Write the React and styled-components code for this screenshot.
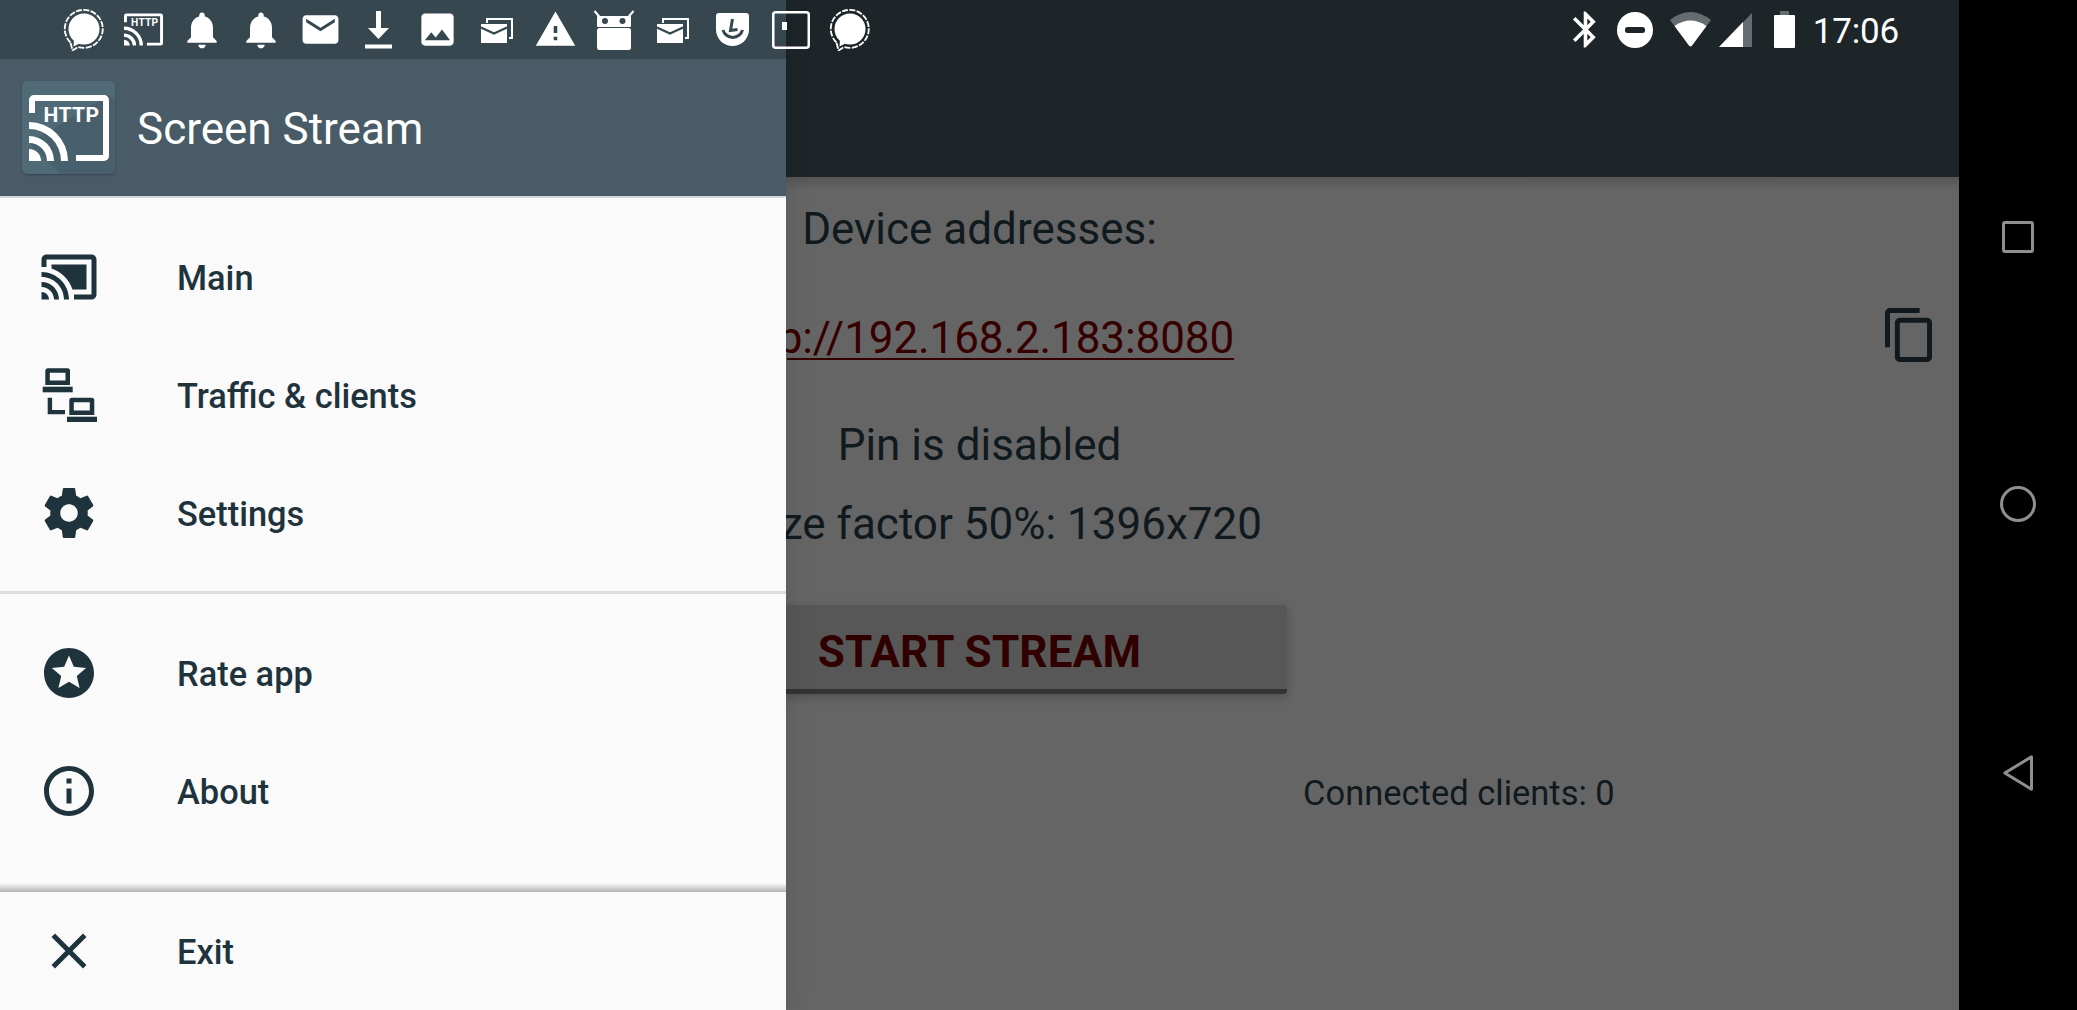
import React from 'react';
import styled, { createGlobalStyle } from 'styled-components';

const Global = createGlobalStyle`
  html, body { margin: 0; padding: 0; background: #000; overflow: hidden; }
  * { box-sizing: border-box; }
`;

const Screen = styled.div`
  width: 2077px; height: 1010px; display: flex; overflow: hidden; background: #000;
  font-family: Roboto, "Liberation Sans", sans-serif;
`;
const Phone = styled.div`
  position: relative; width: 1959px; height: 100%; display: flex; flex-direction: column; background: #656565;
`;
const AppBar = styled.header`
  height: 177px; flex: none; background: #1d2529;
`;
const StatusBar = styled.div`
  position: relative; z-index: 2; height: 59px; display: flex; align-items: center; justify-content: space-between;
  padding: 0 60px 0 55px; color: #fff;
`;
const NotifIcons = styled.div`display: flex; align-items: center;`;
const Slot = styled.span`
  width: 58.9px; height: 59px; display: flex; align-items: center; justify-content: center; flex: none;
  padding-top: ${p => p.$dy || 0}px;
`;
const SysIcons = styled.div`display: flex; align-items: center;`;
const SysSlot = styled.span`
  display: flex; margin-right: ${p => p.$mr}px; padding-top: ${p => p.$dy || 0}px;
`;
const Clock = styled.span`
  font-size: 35px; line-height: 40px; letter-spacing: -0.2px; color: #fff; margin-top: 4px;
`;
const Svg = styled.svg`display: block; fill: currentColor; flex: none;`;

const Content = styled.main`
  flex: 1; min-height: 0; display: flex; flex-direction: column; align-items: center; padding-top: 27px;
  background: linear-gradient(#565656, #656565 14px);
  color: #10191e;
`;
const Line = styled.div`
  font-size: 44px; line-height: 50px; height: 50px; white-space: nowrap; flex: none;
  margin-top: ${p => p.$mt || 0}px;
`;
const LinkRow = styled.div`
  width: 100%; height: 55px; margin-top: 54px; flex: none;
  display: grid; grid-template-columns: 1fr auto 1fr; padding-right: 27px; padding-left: 27px;
`;
const Address = styled.a`
  grid-column: 2; align-self: end; font-size: 44px; line-height: 50px; color: #360000; text-decoration: underline;
  text-decoration-thickness: 2px; text-underline-offset: 5px; white-space: nowrap; letter-spacing: -0.1px;
`;
const CopyBtn = styled.span`
  grid-column: 3; justify-self: end; color: #10191e;
`;
const StartButton = styled.button`
  width: 615px; height: 89px; margin-top: 56px; flex: none; border: 0; border-bottom: 5px solid #333;
  border-radius: 4px; background: #575757; color: #300000; font: 700 44px Roboto, sans-serif; letter-spacing: 0.2px;
  box-shadow: 0 3px 8px rgba(0,0,0,.22); padding: 9px 0 0;
`;
const Clients = styled.div`
  flex: none; margin-top: 74px; align-self: stretch; padding-left: 1303px; font-size: 34.5px; line-height: 50px; white-space: nowrap;
`;

const Drawer = styled.aside`
  position: absolute; left: 0; top: 0; bottom: 0; width: 786px; z-index: 1; display: flex; flex-direction: column;
  background: #fafafa; color: #1f333d; box-shadow: 0 0 24px rgba(0,0,0,.12);
`;
const DrawerStatus = styled.div`height: 59px; flex: none; background: #37474f;`;
const DrawerHeader = styled.div`
  height: 139px; flex: none; background: #485b67; border-bottom: 2px solid #cfd8dc; display: flex; align-items: center;
  padding: 0 0 0 22px; gap: 22px;
`;
const Logo = styled.div`
  width: 93px; height: 93px; border-radius: 5px; background: #506a78; overflow: hidden; flex: none; color: #fff;
  box-shadow: 0 1px 2px rgba(0,0,0,.25);
`;
const Title = styled.div`font-size: 44px; line-height: 54px; color: #fff; margin-top: 2px;`;
const Menu = styled.nav`display: flex; flex-direction: column; padding-top: 20px; flex: none;`;
const Item = styled.div`
  height: 118px; display: flex; align-items: center; flex: none; font-weight: 500; font-size: 34.400px;
`;
const ItemIcon = styled.span`width: 177px; display: flex; justify-content: center; padding-right: 39px; flex: none;`;
const ItemLabel = styled.span`margin-top: 2px;`;
const Divider = styled.div`height: 3px; margin-top: 19px; background: #d9dedf; flex: none;`;
const Spacer = styled.div`flex: 1;`;
const FooterShadow = styled.div`height: 9px; flex: none; background: linear-gradient(#fafafa, #b4b4b4);`;

const NavBar = styled.div`
  width: 118px; flex: none; display: flex; flex-direction: column; align-items: center; padding-top: 221px; gap: 233px; color: #8f8f8f;
`;

const M = ({ d, s = 44, vb = '0 0 24 24' }) => <Svg width={s} height={s} viewBox={vb}><path d={d} /></Svg>;

const GlyphPaths = () => (
  <>
    <path d="M29 113V100a5 5 0 0 1 5-5h70a5 5 0 0 1 5 5v56a5 5 0 0 1-5 5H76v-6h27V101H35v12z" />
    <path d="M29 122a39 39 0 0 1 39 39h-7a32 32 0 0 0-32-32z" />
    <path d="M29 136a25 25 0 0 1 25 25h-7a18 18 0 0 0-18-18z" />
    <path d="M29 149a12 12 0 0 1 12 12H29z" />
    <text x="71.500" y="121.500" textAnchor="middle" fontFamily="Roboto, sans-serif" fontWeight="700" fontSize="21" letterSpacing="0.4" fill="currentColor">HTTP</text>
  </>
);
const LogoGlyph = ({ w, h }) => (
  <Svg width={w} height={h} viewBox="29 95 80 66"><GlyphPaths /></Svg>
);

const SignalLogo = () => (
  <Svg width="42" height="42" viewBox="0 0 42 42">
    <path d="M7.500 33.500A19 19 0 1 1 15 38L9.500 41.500Z" fill="none" stroke="currentColor" strokeWidth="1.800" strokeDasharray="6 1.400" />
    <circle cx="21" cy="20" r="15.500" />
    <path d="M11 30l-.5 7.500 7-3.500z" />
  </Svg>
);
const MailStack = () => (
  <Svg width="32" height="25" viewBox="0 0 32 25">
    <path d="M6 5V1h25v19h-3" fill="none" stroke="currentColor" strokeWidth="2" />
    <rect x="0" y="6" width="26" height="19" />
    <path d="M0 9.500l13 6 13-6" fill="none" stroke="#37474f" strokeWidth="2.200" />
  </Svg>
);
const DroidBox = () => (
  <Svg width="42" height="40" viewBox="0 0 42 40">
    <rect x="4" y="18" width="34" height="22" rx="2.500" />
    <rect x="4" y="6" width="34" height="11" rx="1" />
    <path d="M1.500 1l6 7M40.500 1l-6 7" stroke="currentColor" strokeWidth="2" fill="none" />
    <circle cx="12" cy="11" r="3" fill="#37474f" />
    <circle cx="29.500" cy="11" r="3" fill="#37474f" />
  </Svg>
);
const ShieldClock = () => (
  <Svg width="33" height="33" viewBox="0 0 33 33">
    <path d="M3 0h27a3 3 0 0 1 3 3v13.500a16.500 16.500 0 0 1-33 0V3a3 3 0 0 1 3-3z" />
    <path d="M7 17a10 9.500 0 0 0 19.500 0" fill="none" stroke="#37474f" strokeWidth="3" />
    <path d="M16.500 6l-2 11.500 7-1" fill="none" stroke="#37474f" strokeWidth="3" />
  </Svg>
);
const SquareNote = () => (
  <Svg width="38" height="38" viewBox="0 0 38 38">
    <rect x="1.250" y="1.250" width="35.500" height="35.500" rx="2.500" fill="none" stroke="currentColor" strokeWidth="2.500" />
    <rect x="10" y="11" width="5" height="8" />
  </Svg>
);
const Download = () => (
  <Svg width="29" height="38" viewBox="0 0 29 38">
    <path d="M12 0h5v17h8L14.500 28 4 17h8z" />
    <rect x="1" y="33.500" width="27" height="4" />
  </Svg>
);

const Wifi = () => (
  <Svg width="41" height="35" viewBox="0 0 41 35">
    <path d="M0 8Q20.500-8 41 8L22 33.500a2 2 0 0 1-3 0z" fill="#666c70" />
    <path d="M4.500 14Q20.500 3 36.500 14L22 33.500a2 2 0 0 1-3 0z" />
  </Svg>
);
const Cell = () => (
  <Svg width="33" height="34" viewBox="0 0 33 34">
    <path d="M33 0v34H0z" fill="#666c70" />
    <path d="M24 9v25H0z" />
  </Svg>
);
const Battery = () => (
  <Svg width="21" height="37" viewBox="0 0 21 37">
    <path d="M6 0h9v4H6z" fill="#666c70" />
    <path d="M1 4h19a1 1 0 0 1 1 1v31a1 1 0 0 1-1 1H1a1 1 0 0 1-1-1V5a1 1 0 0 1 1-1z" />
  </Svg>
);
const Dnd = () => (
  <Svg width="36" height="36" viewBox="0 0 36 36">
    <circle cx="18" cy="18" r="18" />
    <rect x="8" y="15" width="20" height="6" rx="2.500" fill="#1d2529" />
  </Svg>
);
const TrafficIcon = () => (
  <Svg width="60" height="60" viewBox="0 0 60 60">
    <path d="M9 3.300h19.500a2.500 2.500 0 0 1 2.500 2.500V20H6.300V5.800a2.500 2.500 0 0 1 2.700-2.500zM10.800 7.800V15.500h15.700V7.800z" fillRule="evenodd" />
    <rect x="3.700" y="21.700" width="30" height="5.600" />
    <path d="M8.700 32.700h4.400v12.200H26v4.400H8.700z" />
    <path d="M33 32.700h19.600a2.700 2.700 0 0 1 2.700 2.700V50H30.300V35.400a2.700 2.700 0 0 1 2.700-2.700zM34.800 37.200V45.500h16V37.200z" fillRule="evenodd" />
    <rect x="28" y="51.700" width="30" height="5.300" />
  </Svg>
);

const NavSquare = () => (
  <Svg width="32" height="32" viewBox="0 0 32 32"><rect x="1.500" y="1.500" width="29" height="29" rx="1.500" fill="none" stroke="currentColor" strokeWidth="3" /></Svg>
);
const NavCircle = () => (
  <Svg width="36" height="36" viewBox="0 0 36 36"><circle cx="18" cy="18" r="16.500" fill="none" stroke="currentColor" strokeWidth="3" /></Svg>
);
const NavBack = () => (
  <Svg width="30" height="36" viewBox="0 0 30 36"><path d="M28.500 1.800V34.200L1.800 18z" fill="none" stroke="currentColor" strokeWidth="3" strokeLinejoin="round" /></Svg>
);

const P = {
  bell: 'M12 22c1.100 0 2-.9 2-2h-4c0 1.100.89 2 2 2zm6-6v-5c0-3.070-1.640-5.640-4.500-6.320V4c0-.83-.67-1.500-1.500-1.500s-1.500.67-1.500 1.500v.68C7.630 5.360 6 7.920 6 11v5l-2 2v1h16v-1l-2-2z',
  mail: 'M20 4H4c-1.100 0-1.990.9-1.990 2L2 18c0 1.100.9 2 2 2h16c1.100 0 2-.9 2-2V6c0-1.100-.9-2-2-2zm0 4l-8 5-8-5V6l8 5 8-5v2z',
  image: 'M21 19V5c0-1.100-.9-2-2-2H5c-1.100 0-2 .9-2 2v14c0 1.100.9 2 2 2h14c1.100 0 2-.9 2-2zM8.500 13.500l2.500 3.010L14.500 12l4.500 6H5l3.500-4.500z',
  warn: 'M1 21h22L12 2 1 21zm12-3h-2v-2h2v2zm0-4h-2v-4h2v4z',
  bt: 'M17.710 7.710L12 2h-1v7.590L6.410 5 5 6.410 10.590 12 5 17.590 6.410 19 11 14.410V22h1l5.710-5.710-4.300-4.290 4.300-4.290zM13 5.830l1.880 1.880L13 9.590V5.830zm1.880 10.460L13 18.170v-3.760l1.880 1.880z',
  cast: 'M1 18v3h3c0-1.660-1.340-3-3-3zm0-4v2c2.760 0 5 2.240 5 5h2c0-3.870-3.130-7-7-7zm18-7H5v1.630c3.960 1.280 7.090 4.410 8.370 8.370H19V7zM1 10v2c4.970 0 9 4.030 9 9h2c0-6.080-4.930-11-11-11zm20-7H3c-1.100 0-2 .9-2 2v3h2V5h18v14h-7v2h7c1.100 0 2-.9 2-2V5c0-1.100-.9-2-2-2z',
  gear: 'M19.430 12.980c.04-.32.07-.64.07-.98s-.03-.66-.07-.98l2.110-1.650c.19-.15.24-.42.12-.64l-2-3.460c-.12-.22-.39-.3-.61-.22l-2.490 1c-.52-.4-1.080-.73-1.690-.98l-.38-2.650C14.460 2.180 14.250 2 14 2h-4c-.25 0-.46.18-.49.42l-.38 2.650c-.61.25-1.170.59-1.690.98l-2.490-1c-.23-.09-.49 0-.61.22l-2 3.460c-.13.22-.07.49.12.64l2.110 1.650c-.04.32-.07.65-.07.98s.03.66.07.98l-2.110 1.650c-.19.15-.24.42-.12.64l2 3.460c.12.22.39.3.61.22l2.490-1c.52.4 1.080.73 1.690.98l.38 2.650c.03.24.24.42.49.42h4c.25 0 .46-.18.49-.42l.38-2.650c.61-.25 1.170-.59 1.690-.98l2.490 1c.23.09.49 0 .61-.22l2-3.460c.12-.22.07-.49-.12-.64l-2.110-1.650zM12 15.500c-1.930 0-3.500-1.570-3.500-3.500s1.570-3.500 3.500-3.500 3.500 1.570 3.500 3.500-1.570 3.500-3.500 3.500z',
  star: 'M11.990 2C6.470 2 2 6.480 2 12s4.470 10 9.990 10C17.520 22 22 17.520 22 12S17.520 2 11.990 2zm4.240 16L12 15.450 7.770 18l1.120-4.810-3.730-3.230 4.920-.42L12 5l1.920 4.530 4.920.42-3.730 3.230L16.230 18z',
  info: 'M11 17h2v-6h-2v6zm1-15C6.480 2 2 6.480 2 12s4.480 10 10 10 10-4.480 10-10S17.520 2 12 2zm0 18c-4.410 0-8-3.590-8-8s3.590-8 8-8 8 3.590 8 8-3.590 8-8 8zM11 9h2V7h-2v2z',
  close: 'M19 6.410L17.590 5 12 10.590 6.410 5 5 6.410 10.590 12 5 17.590 6.410 19 12 13.410 17.590 19 19 17.590 13.410 12z',
  copy: 'M16 1H4c-1.100 0-2 .9-2 2v14h2V3h12V1zm3 4H8c-1.100 0-2 .9-2 2v14c0 1.100.9 2 2 2h11c1.100 0 2-.9 2-2V7c0-1.100-.9-2-2-2zm0 16H8V7h11v14z',
};

const items1 = [
  ['Main', <M d={P.cast} s={60} />],
  ['Traffic & clients', <TrafficIcon />],
  ['Settings', <M d={P.gear} s={60} />],
];
const items2 = [
  ['Rate app', <M d={P.star} s={60} />],
  ['About', <M d={P.info} s={60} />],
];

export default function App() {
  return (
    <Screen>
      <Global />
      <Phone>
        <AppBar>
          <StatusBar>
            <NotifIcons>
              <Slot><SignalLogo /></Slot>
              <Slot><LogoGlyph w={39} h={33} /></Slot>
              <Slot><M d={P.bell} s={44} /></Slot>
              <Slot><M d={P.bell} s={44} /></Slot>
              <Slot><M d={P.mail} s={43} /></Slot>
              <Slot><Download /></Slot>
              <Slot><M d={P.image} s={43} /></Slot>
              <Slot $dy={1}><MailStack /></Slot>
              <Slot><M d={P.warn} s={43} /></Slot>
              <Slot><DroidBox /></Slot>
              <Slot $dy={1}><MailStack /></Slot>
              <Slot><ShieldClock /></Slot>
              <Slot><SquareNote /></Slot>
              <Slot><SignalLogo /></Slot>
            </NotifIcons>
            <SysIcons>
              <SysSlot $mr={10}><M d={P.bt} s={43} /></SysSlot>
              <SysSlot $mr={17}><Dnd /></SysSlot>
              <SysSlot $mr={8}><Wifi /></SysSlot>
              <SysSlot $mr={22}><Cell /></SysSlot>
              <SysSlot $mr={17.500}><Battery /></SysSlot>
              <Clock>17:06</Clock>
            </SysIcons>
          </StatusBar>
        </AppBar>
        <Content>
          <Line>Device addresses:</Line>
          <LinkRow>
            <Address>http://192.168.2.183:8080</Address>
            <CopyBtn>
              <Svg width="47" height="54" viewBox="2 1 19 22" preserveAspectRatio="none"><path d={P.copy} /></Svg>
            </CopyBtn>
          </LinkRow>
          <Line $mt={57}>Pin is disabled</Line>
          <Line $mt={29}>Resize factor 50%: 1396x720</Line>
          <StartButton>START STREAM</StartButton>
          <Clients>Connected clients: 0</Clients>
        </Content>
        <Drawer>
          <DrawerStatus />
          <DrawerHeader>
            <Logo>
              <Svg width="93" height="93" viewBox="0 0 93 93">
                <path d="M87 14l6 6v73H38L7 62z" fill="#000" fillOpacity=".09" />
                <svg x="7" y="14" width="80" height="66" viewBox="29 95 80 66" fill="#fff" color="#fff">
                  <GlyphPaths />
                </svg>
              </Svg>
            </Logo>
            <Title>Screen Stream</Title>
          </DrawerHeader>
          <Menu>
            {items1.map(([t, i]) => <Item key={t}><ItemIcon>{i}</ItemIcon><ItemLabel>{t}</ItemLabel></Item>)}
          </Menu>
          <Divider />
          <Menu>
            {items2.map(([t, i]) => <Item key={t}><ItemIcon>{i}</ItemIcon><ItemLabel>{t}</ItemLabel></Item>)}
          </Menu>
          <Spacer />
          <FooterShadow />
          <Item><ItemIcon><M d={P.close} s={60} /></ItemIcon><ItemLabel>Exit</ItemLabel></Item>
        </Drawer>
      </Phone>
      <NavBar>
        <NavSquare />
        <NavCircle />
        <NavBack />
      </NavBar>
    </Screen>
  );
}
